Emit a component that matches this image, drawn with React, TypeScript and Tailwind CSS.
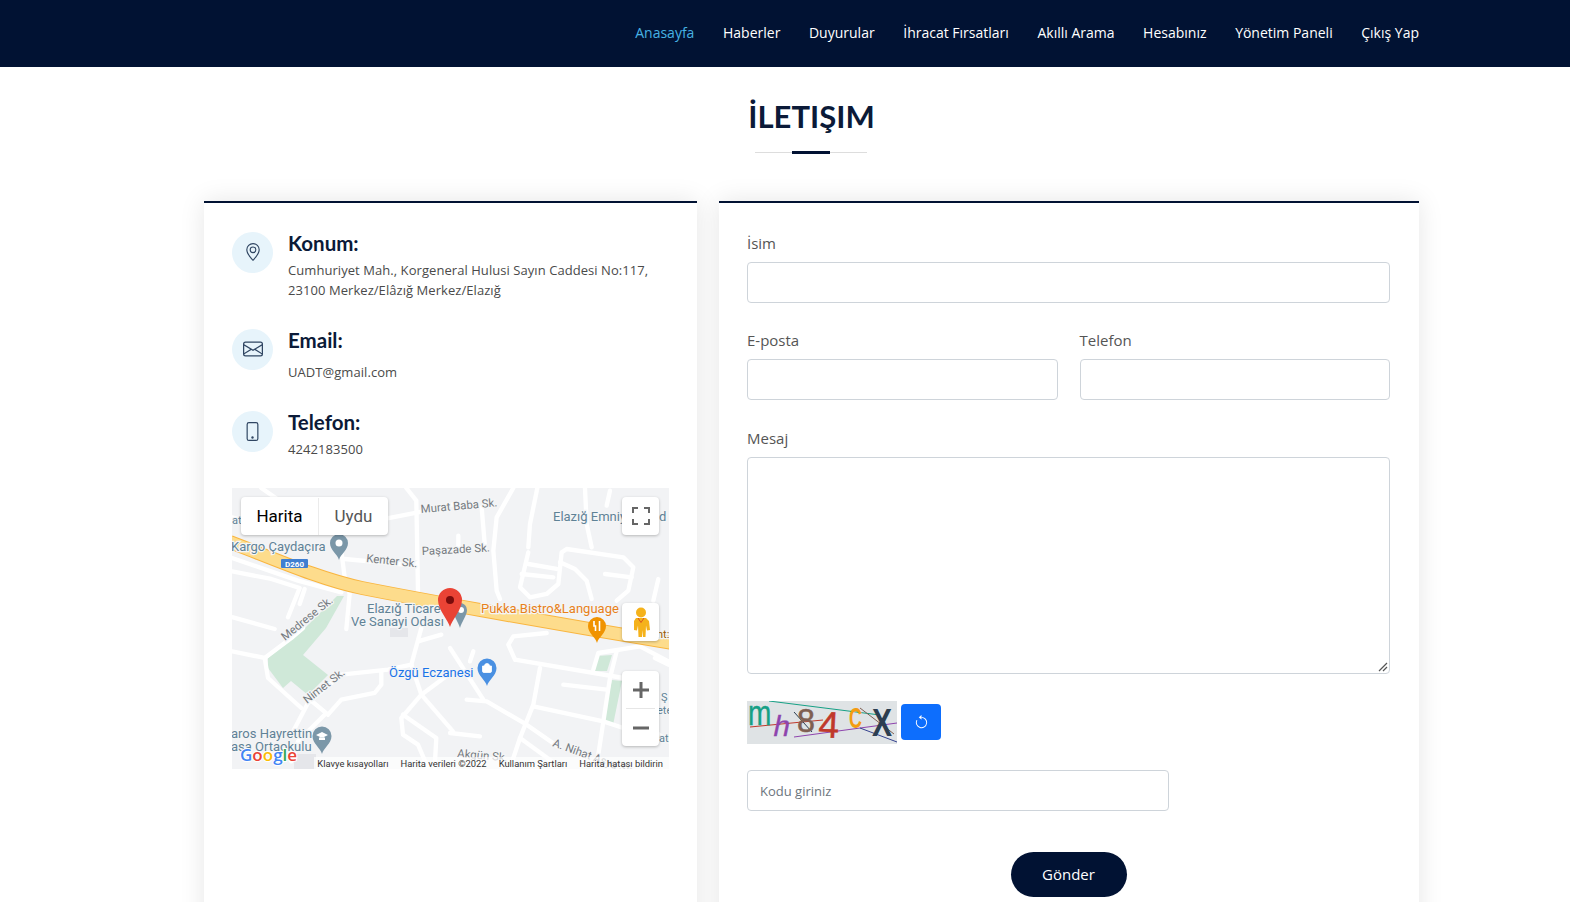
import React from "react";
import { BsGeoAlt, BsEnvelope, BsPhone, BsArrowCounterclockwise } from "react-icons/bs";

const nav = ["Anasayfa", "Haberler", "Duyurular", "İhracat Fırsatları", "Akıllı Arama", "Hesabınız", "Yönetim Paneli", "Çıkış Yap"];

function InfoRow({ icon, title, h, textClass, children }: { icon: React.ReactNode; title: string; h: string; textClass: string; children: React.ReactNode }) {
  return (
    <div className={`flex ${h}`}>
      <div className="w-[41px] h-[41px] rounded-full bg-[#e7f4fb] flex items-center justify-center text-[#2f4562] shrink-0 pb-px">{icon}</div>
      <div className="ml-[15px]">
        <div className="text-[20.5px] leading-[22px] font-bold text-[#0b1a38] font-['Lato',sans-serif]">{title}</div>
        <div className={`text-[13px] leading-5 tracking-[0.06px] text-[#4a4a4a] ${textClass}`}>{children}</div>
      </div>
    </div>
  );
}

const R3 = ["12,222 210,290 340,325","12,262 130,285 215,312 180,400","15,400 140,435","100,12 155,50","12,100 60,112","470,105 570,85 680,60","535,12 565,50 570,320","340,200 350,280 365,330 355,435","350,225 560,245","230,315 215,360"];
const R4 = ["190,12 140,100 130,200 140,320 150,345","262,12 240,120 235,190","405,12 410,120 425,190","235,205 210,310 240,340 290,330 325,300 335,205 350,195 520,220 550,250 535,320 500,350","235,240 320,255","215,270 310,280","330,235 375,255 410,290 425,345","465,270 545,280","625,285 610,350","480,20 470,65","95,70 105,190","25,155 25,190"];
const R5 = ["12,70 110,90 190,30 225,0","110,90 120,150 220,240","190,320 240,225 340,140 480,125 550,110 580,0","240,210 300,260","300,260 340,215 440,195 460,170 460,130","290,260 210,340 190,400","550,110 580,200 675,310","580,200 675,130","580,200 520,270 525,320 570,350 600,420","525,260 625,330 620,420","570,40 640,20"];
const R6 = ["195,95 175,50 190,25 290,15","195,95 520,150","50,215 110,220 230,290 330,360","0,60 100,215","270,120 250,230 210,330 180,420","250,235 460,280 520,300","340,170 470,185","430,125 445,75 570,55 655,100","500,70 480,150 445,380","70,70 60,100","0,315 90,325","615,90 655,110","210,330 320,410","600,300 655,340"];

function Roads({ list, tx, ty }: { list: string[]; tx: number; ty: number }) {
  return (
    <g transform={`translate(${tx},${ty}) scale(0.3333)`} fill="none" stroke="#fff" strokeWidth="13" strokeLinecap="round" strokeLinejoin="round">
      {list.map((p) => <polyline key={p} points={p} />)}
    </g>
  );
}

function Pin({ x, y, r, tip, fill, children }: { x: number; y: number; r: number; tip: number; fill: string; children?: React.ReactNode }) {
  return (
    <g>
      <path d={`M${x - r} ${y}A${r} ${r} 0 1 1 ${x + r} ${y}C${x + r} ${y + r * 0.8} ${x + 1.5} ${tip - 6} ${x} ${tip}C${x - 1.5} ${tip - 6} ${x - r} ${y + r * 0.8} ${x - r} ${y}Z`} fill={fill} />
      {children}
    </g>
  );
}

function MapLabel({ x, y, size = 13, fill, rot = 0, children }: { x: number; y: number; size?: number; fill: string; rot?: number; children: React.ReactNode }) {
  return (
    <text x={x} y={y} fontSize={size} fill={fill} stroke="#f4f5f6" strokeWidth="2.5" paintOrder="stroke" transform={rot ? `rotate(${rot} ${x} ${y})` : undefined} fontFamily="Roboto, sans-serif">
      {children}
    </text>
  );
}

const roadPath = "M-2 54C40 70 90 92 130 100S300 132 440 155";

function MapView() {
  const poi = "#5f8296";
  const street = "#747a80";
  return (
    <div className="relative w-[437px] h-[281px] overflow-hidden bg-[#f2f3f5] font-['Roboto',sans-serif]">
      <svg width="437" height="281" viewBox="0 0 437 281" className="block">
        <g fill="#e5e6ea">
          <rect x="62" y="266" width="22" height="15" />
          <rect x="158" y="140" width="18" height="9" />
        </g>
        <g fill="#cfe8d8">
          <polygon points="36,170 51,158 73,140 105,108 112,108 94,140 71,167 96,187 76,207 59,193 51,200 36,180" />
          <polygon points="365,168 380,167 375,183 360,183" />
          <polygon points="380,192 390,193 381,237 371,233" />
        </g>
        <Roads list={R3} tx={-4} ty={-4} />
        <Roads list={R4} tx={218} ty={-4} />
        <Roads list={R5} tx={-4} ty={140} />
        <Roads list={R6} tx={218} ty={140} />
        <path d={roadPath} fill="none" stroke="#f9b53f" strokeWidth="14" />
        <path d={roadPath} fill="none" stroke="#fddc8c" strokeWidth="12" />
        <rect x="49" y="71" width="27" height="9" rx="1" fill="#3f7fd1" />
        <text x="62.5" y="78.5" textAnchor="middle" fontSize="8" fontWeight="700" fill="#fff" fontFamily="Roboto, sans-serif">D260</text>

        <MapLabel x={189} y={25} size={11.4} fill={street} rot={-5}>Murat Baba Sk.</MapLabel>
        <MapLabel x={321} y={33} fill={poi}>Elazığ Emniyet Müd</MapLabel>
        <MapLabel x={190} y={67} size={11.4} fill={street} rot={-3}>Paşazade Sk.</MapLabel>
        <MapLabel x={134} y={74} size={11.4} fill={street} rot={6}>Kenter Sk.</MapLabel>
        <MapLabel x={0} y={36} size={11} fill={poi}>at</MapLabel>
        <MapLabel x={-1} y={63} fill={poi}>Kargo Çaydaçıra</MapLabel>
        <MapLabel x={135} y={125} fill={poi}>Elazığ Ticare</MapLabel>
        <MapLabel x={119} y={138} fill={poi}>Ve Sanayi Odası</MapLabel>
        <MapLabel x={249} y={125} fill="#e8811a">Pukka Bistro&amp;Language</MapLabel>
        <MapLabel x={425} y={150} size={11} fill="#9a5b00">nt:</MapLabel>
        <MapLabel x={157} y={189} fill="#1a73e8">Özgü Eczanesi</MapLabel>
        <MapLabel x={53} y={153} size={11.4} fill={street} rot={-39}>Medrese Sk.</MapLabel>
        <MapLabel x={75} y={216} size={11.4} fill={street} rot={-38}>Nimet Sk.</MapLabel>
        <MapLabel x={-1} y={250} fill={poi}>aros Hayrettin</MapLabel>
        <MapLabel x={-1} y={263} fill={poi}>aşa Ortaokulu</MapLabel>
        <MapLabel x={225} y={269} size={11.4} fill={street} rot={5}>Akgün Sk.</MapLabel>
        <MapLabel x={320} y={258} size={11.4} fill={street} rot={20}>A. Nihat Asya Sk.</MapLabel>
        <MapLabel x={429} y={213} size={11} fill={poi}>Ş</MapLabel>
        <MapLabel x={425} y={226} size={11} fill={poi}>ete</MapLabel>
        <MapLabel x={427} y={254} size={11} fill={poi}>atl</MapLabel>

        <Pin x={107} y={55} r={9} tip={72} fill="#7b97a8"><circle cx={107} cy={55} r={3.5} fill="#fff" /></Pin>
        <Pin x={228} y={122} r={7} tip={140} fill="#7b97a8"><circle cx={229} cy={122} r={3} fill="#fff" /></Pin>
        <Pin x={365} y={138} r={9} tip={155} fill="#f09300">
          <path d="M362 133v5h1.5v5M367.5 133v10" stroke="#fff" strokeWidth="1.6" fill="none" />
        </Pin>
        <Pin x={255} y={180} r={9.5} tip={198} fill="#4a90e2">
          <path d="M250.5 178h9v5a1.5 1.5 0 0 1-1.5 1.5h-6a1.5 1.5 0 0 1-1.5-1.5zM252.5 178a2.5 2.5 0 0 1 5 0" fill="#fff" stroke="#fff" strokeWidth="0.8" />
        </Pin>
        <Pin x={90} y={248} r={9.5} tip={266} fill="#7b97a8">
          <path d="M84 247l6-3 6 3-6 3zM87 249.5v2.5h6v-2.5" fill="#fff" />
        </Pin>
        <Pin x={218} y={112} r={12} tip={139} fill="#ea4335"><circle cx={218} cy={112} r={4} fill="#7a0c0c" /></Pin>

        <text x={8} y={273} fontSize={17} fontWeight="600" fontFamily="'Open Sans', sans-serif" stroke="#fff" strokeWidth="2" paintOrder="stroke">
          <tspan fill="#4285f4">G</tspan><tspan fill="#ea4335">o</tspan><tspan fill="#fbbc05">o</tspan><tspan fill="#4285f4">g</tspan><tspan fill="#34a853">l</tspan><tspan fill="#ea4335">e</tspan>
        </text>
      </svg>

      <div className="absolute left-[9px] top-[9px] w-[147px] h-[38px] flex bg-white rounded-sm shadow-[0_1px_3px_rgba(0,0,0,0.25)] text-[17px] pt-px">
        <div className="w-[78px] flex items-center justify-center text-black border-r border-[#ebebeb]">Harita</div>
        <div className="flex-1 flex items-center justify-center text-[#565656]">Uydu</div>
      </div>
      <div className="absolute left-[390px] top-[9px] w-[37px] h-[38px] bg-white rounded-sm shadow-[0_1px_3px_rgba(0,0,0,0.25)] flex items-center justify-center">
        <svg width="18" height="18" viewBox="0 0 18 18" fill="none" stroke="#666" strokeWidth="2"><path d="M1 6V1h5M12 1h5v5M17 12v5h-5M6 17H1v-5" /></svg>
      </div>
      <div className="absolute left-[390px] top-[115px] w-[37px] h-[38px] bg-white rounded-sm shadow-[0_1px_3px_rgba(0,0,0,0.25)] flex items-center justify-center">
        <svg width="18" height="30" viewBox="0 0 18 30">
          <circle cx="9" cy="5.5" r="5" fill="#f5b21b" />
          <path d="M4 11h10l3 3 1 9-3 .5-1-5-.5 11.500h-2.500l-.5-7-.5 7H6.500L6 18.500l-1 5-3-.5 0-9z" fill="#f5b21b" />
          <path d="M6 11l3 4.500 3-4.500" fill="none" stroke="#d9541e" strokeWidth="1" />
        </svg>
      </div>
      <div className="absolute left-[390px] top-[183px] w-[37px] h-[75px] bg-white rounded-sm shadow-[0_1px_3px_rgba(0,0,0,0.25)] flex flex-col items-center">
        <div className="h-[37px] flex items-center justify-center">
          <svg width="18" height="18" viewBox="0 0 18 18"><path d="M7.500 1h3v6.500H17v3h-6.500V17h-3v-6.500H1v-3h6.500z" fill="#666" /></svg>
        </div>
        <div className="w-[29px] h-px bg-[#e6e6e6]" />
        <div className="h-[37px] flex items-center justify-center">
          <svg width="18" height="18" viewBox="0 0 18 18"><rect x="1" y="7.500" width="16" height="3" fill="#666" /></svg>
        </div>
      </div>
      <div className="absolute right-0 bottom-0 h-[12px] w-[355px] bg-white/70 flex items-center justify-end pr-[6px] pt-px gap-[12px] text-[9.4px] leading-none text-[#333] whitespace-nowrap">
        <span>Klavye kısayolları</span>
        <span>Harita verileri ©2022</span>
        <span>Kullanım Şartları</span>
        <span>Harita hatası bildirin</span>
      </div>
    </div>
  );
}

function Captcha() {
  return (
    <svg width="150" height="43" viewBox="0 0 150 43" className="block bg-[#dfe3e5]">
      <g fill="none" strokeWidth="1">
        <line x1="22" y1="0" x2="133" y2="14" stroke="#16a085" />
        <line x1="3" y1="26" x2="76" y2="19" stroke="#c0392b" />
        <line x1="47" y1="36" x2="150" y2="22" stroke="#8e44ad" />
        <line x1="113" y1="27" x2="150" y2="41" stroke="#34418e" />
        <line x1="113" y1="7" x2="147" y2="33" stroke="#7f5f52" />
        <line x1="47" y1="11" x2="65" y2="31" stroke="#2c3e50" />
      </g>
      <g fontFamily="'Liberation Sans', sans-serif">
        <text fontSize="35" fill="#16a085" stroke="#16a085" strokeWidth="0.4" transform="translate(1,24) scale(0.8,1)">m</text>
        <text fontSize="29" fill="#8e44ad" stroke="#8e44ad" strokeWidth="0.4" transform="translate(25,35) skewX(-12)">h</text>
        <text fontSize="34" fill="#7f5f52" stroke="#7f5f52" strokeWidth="0.5" transform="translate(50,31) scale(0.95,1)">8</text>
        <text fontSize="37" fill="#c0392b" stroke="#c0392b" strokeWidth="0.5" transform="translate(71,36) rotate(3)">4</text>
        <text fontSize="30" fontWeight="700" fill="#f39c12" transform="translate(102,27) scale(0.6,1)">C</text>
        <text fontSize="39" fontWeight="700" fill="#2c3e50" transform="translate(125,35) scale(0.77,1)">X</text>
      </g>
    </svg>
  );
}

function Label({ children }: { children: React.ReactNode }) {
  return <label className="block text-[15px] leading-5 h-[20px] text-[#555] mb-[9px]">{children}</label>;
}

const inputCls = "block w-full h-[41px] border border-[#ced4da] rounded-[4px] bg-white";

export default function App() {
  return (
    <div className="h-[902px] overflow-hidden bg-white font-['Open_Sans',sans-serif]">
      <header className="h-[67px] bg-[#011233] flex items-center justify-end pr-[151px] pb-[2px] gap-[28.6px] text-[14px] text-white">
        {nav.map((n, i) => (
          <a key={n} className={i === 0 ? "text-[#47b2e4]" : "text-white"}>{n}</a>
        ))}
      </header>

      <main className="pl-[204px] pr-[151px]">
        <div className="h-[134px] pt-[30px] pr-[2px] flex flex-col items-center">
          <h2 className="text-[31px] leading-[38px] font-bold text-[#0b1a38] font-['Lato',sans-serif] translate-x-px">İLETIŞIM</h2>
          <div className="relative mt-[17px] w-[112px] h-px bg-[#ddd]">
            <div className="absolute left-[37px] top-[-1px] w-[38px] h-[3px] bg-[#011233]" />
          </div>
        </div>

        <div className="grid grid-cols-[493px_700px] gap-[22px]">
          <section className="h-[900px] border-t-[2px] border-[#011233] bg-white shadow-[0_0_24px_rgba(0,0,0,0.1)] pt-[29px] px-[28px]">
            <InfoRow icon={<BsGeoAlt size={18} />} title="Konum:" h="h-[97px]" textClass="mt-[6px]">
              Cumhuriyet Mah., Korgeneral Hulusi Sayın Caddesi No:117,<br />23100 Merkez/Elâzığ Merkez/Elazığ
            </InfoRow>
            <InfoRow icon={<BsEnvelope size={20} />} title="Email:" h="h-[82px]" textClass="mt-[11px]">UADT@gmail.com</InfoRow>
            <InfoRow icon={<BsPhone size={19} />} title="Telefon:" h="h-[77px]" textClass="mt-[6px]">4242183500</InfoRow>
            <MapView />
          </section>

          <section className="h-[900px] border-t-[2px] border-[#011233] bg-white shadow-[0_0_24px_rgba(0,0,0,0.1)] pt-[30px] pl-[28px] pr-[29px]">
            <Label>İsim</Label>
            <div className={inputCls} />
            <div className="grid grid-cols-2 gap-[22px] mt-[27px]">
              <div><Label>E-posta</Label><div className={inputCls} /></div>
              <div><Label>Telefon</Label><div className={inputCls} /></div>
            </div>
            <div className="mt-[28px]">
              <Label>Mesaj</Label>
              <div className="relative w-full h-[217px] border border-[#ced4da] rounded-[4px]">
                <svg width="10" height="10" viewBox="0 0 10 10" className="absolute right-[1px] bottom-[1px]" stroke="#555" strokeWidth="1.2">
                  <path d="M1 9L9 1M5 9L9 5" />
                </svg>
              </div>
            </div>
            <div className="flex items-start gap-[4px] mt-[27px]">
              <Captcha />
              <button className="w-[40px] h-[36px] mt-[3px] rounded-[4px] bg-[#0d6efd] text-white flex items-center justify-center">
                <BsArrowCounterclockwise size={15} />
              </button>
            </div>
            <div className="w-[422px] h-[41px] mt-[26px] border border-[#ced4da] rounded-[4px] flex items-center px-[12px] pt-[2px] text-[13px] text-[#6c757d]">Kodu giriniz</div>
            <div className="flex justify-center mt-[41px]">
              <button className="w-[116px] h-[45px] rounded-full bg-[#011233] text-white text-[15px]">Gönder</button>
            </div>
          </section>
        </div>
      </main>
    </div>
  );
}
